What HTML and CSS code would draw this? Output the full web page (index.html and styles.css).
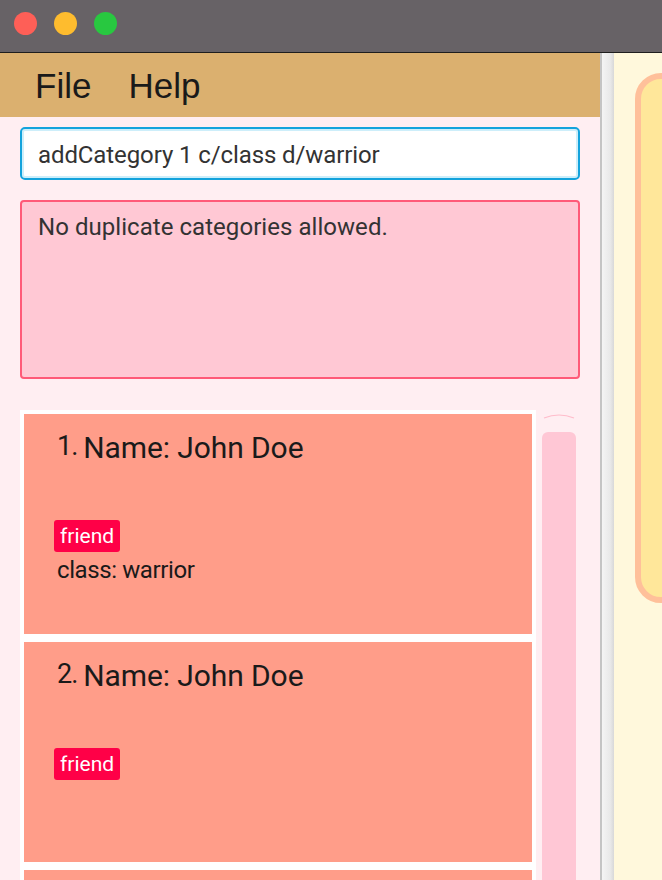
FILE: index.html
```html
<!DOCTYPE html>
<html>
<head>
<meta charset="utf-8">
<link rel="stylesheet" href="styles.css">
</head>
<body>
<div class="window">
  <div class="titlebar">
    <span class="dot red"></span>
    <span class="dot yellow"></span>
    <span class="dot green"></span>
  </div>
  <div class="main">
    <div class="left">
      <div class="menubar">
        <span class="menu-item">File</span>
        <span class="menu-item">Help</span>
      </div>
      <div class="command">addCategory 1 c/class d/warrior</div>
      <div class="result">No duplicate categories allowed.</div>
      <div class="list-area">
        <div class="list">
          <div class="card">
            <div class="title"><span class="index">1.</span><span class="name">Name: John Doe</span></div>
            <div class="tags"><span class="tag">friend</span></div>
            <div class="category">class: warrior</div>
          </div>
          <div class="card">
            <div class="title"><span class="index">2.</span><span class="name">Name: John Doe</span></div>
            <div class="tags"><span class="tag">friend</span></div>
          </div>
          <div class="card"></div>
        </div>
        <div class="scrollbar">
          <svg class="arrow" width="32" height="6" viewBox="0 0 32 6"><path d="M1 5 Q16 -1 31 5" fill="none" stroke="#ffbccb" stroke-width="1.2"/></svg>
          <div class="track"></div>
        </div>
      </div>
    </div>
    <div class="divider"></div>
    <div class="right">
      <div class="panel"></div>
    </div>
  </div>
</div>
</body>
</html>
```
FILE: styles.css
```css
html, body {
  margin: 0;
  padding: 0;
  width: 662px;
  height: 880px;
  overflow: hidden;
  font-family: Roboto, "Liberation Sans", sans-serif;
}
.window {
  display: flex;
  flex-direction: column;
  height: 880px;
  overflow: hidden;
}
.titlebar {
  background: #676266;
  border-bottom: 1px solid #1e1e1e;
  display: flex;
  align-items: center;
  padding-left: 14px;
  gap: 17px;
  flex: none;
  box-sizing: border-box;
  height: 53px;
  padding-bottom: 5px;
}
.dot {
  width: 23px;
  height: 23px;
  border-radius: 50%;
  display: block;
}
.red { background: #fe5f57; }
.yellow { background: #febc2e; }
.green { background: #28c840; }
.main {
  display: flex;
  flex: 1;
  min-height: 0;
  overflow: hidden;
}
.left {
  width: 600px;
  flex: none;
  background: #ffeef2;
  display: flex;
  flex-direction: column;
  overflow: hidden;
}
.menubar {
  height: 64px;
  background: #dbb06f;
  display: flex;
  align-items: center;
  padding-left: 35px;
  gap: 37px;
  flex: none;
}
.menu-item {
  font-family: "Liberation Sans", Arial, sans-serif;
  font-size: 35px;
  color: #1a1a1a;
  padding-top: 1px;
}
.command {
  margin: 10px 20px 0 20px;
  height: 53px;
  box-sizing: border-box;
  background: #fff;
  border: 2px solid #13a3dc;
  border-radius: 5px;
  box-shadow: inset 0 0 0 2px #cdeefa;
  padding-left: 16px;
  padding-top: 2px;
  font-size: 24px;
  letter-spacing: -0.1px;
  color: #333;
  display: flex;
  align-items: center;
  flex: none;
}
.result {
  margin: 20px 20px 0 20px;
  height: 179px;
  box-sizing: border-box;
  background: #ffc8d4;
  border: 2px solid #ff5a78;
  border-radius: 4px;
  padding: 11px 0 0 16px;
  font-size: 24px;
  letter-spacing: 0.05px;
  color: #333;
  flex: none;
}
.list-area {
  margin: 31px 0 0 20px;
  display: flex;
  flex: 1;
  min-height: 0;
  overflow: hidden;
}
.list {
  width: 516px;
  box-sizing: border-box;
  background: #fff;
  padding: 4px;
  display: flex;
  flex-direction: column;
  gap: 8px;
  flex: none;
}
.card {
  height: 220px;
  flex: none;
  background: #ff9d89;
  box-sizing: border-box;
  padding: 17px 0 0 33px;
  color: #1a1a1a;
}
.title {
  display: flex;
  align-items: flex-start;
  height: 34px;
}
.index {
  font-size: 27px;
  letter-spacing: -1px;
  margin-right: 6px;
  line-height: 30px;
}
.name {
  font-size: 30px;
  letter-spacing: -0.1px;
  line-height: 34px;
  margin-top: 0;
}
.tags {
  margin-top: 55px;
  margin-left: -3px;
  display: flex;
}
.tag {
  background: #ff0047;
  color: #fff;
  font-size: 21px;
  height: 32px;
  line-height: 32px;
  padding: 0 6px;
  border-radius: 3px;
}
.category {
  font-size: 24px;
  letter-spacing: -0.4px;
  margin-top: 4px;
}
.scrollbar {
  margin-left: 6px;
  width: 34px;
  display: flex;
  flex-direction: column;
  align-items: center;
}
.arrow {
  margin-top: 3px;
  display: block;
}
.track {
  margin-top: 13px;
  width: 34px;
  flex: 1;
  background: #ffc7d5;
  border-radius: 6px 6px 0 0;
}
.divider {
  width: 14px;
  flex: none;
  box-sizing: border-box;
  border-left: 2px solid #c4c4c4;
  background: linear-gradient(to right, #f4f4f4, #e8e8e8 70%, #d8d8d8);
}
.right {
  flex: 1;
  background: #fff8dc;
  overflow: hidden;
  padding: 20px 0 0 21px;
}
.panel {
  width: 120px;
  height: 530px;
  box-sizing: border-box;
  border: 6px solid #ffc09a;
  border-radius: 26px;
  background: #ffe79a;
}
```
